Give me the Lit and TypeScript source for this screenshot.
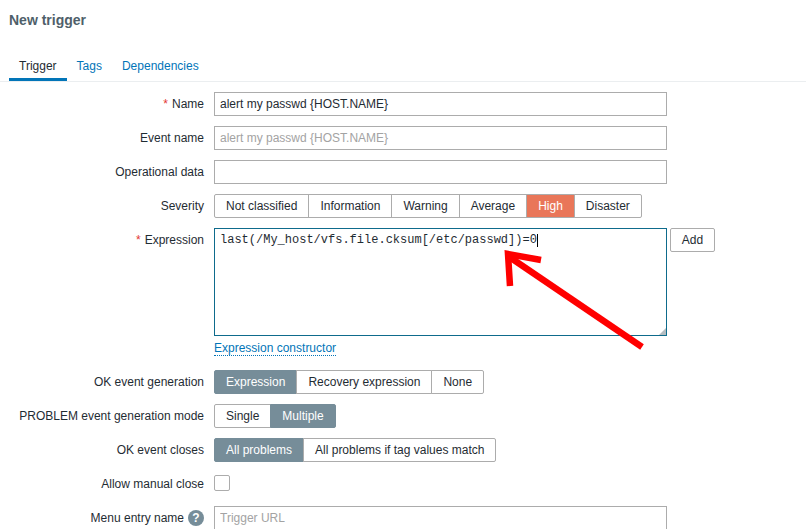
import { LitElement, html, css } from "lit";
import { customElement } from "lit/decorators.js";

type Seg = { t: string; on?: boolean; high?: boolean };

const seg = (items: Seg[]) => html`<div class="seg">
  ${items.map(
    (i) => html`<span class="opt ${i.on ? "on" : ""} ${i.high ? "high" : ""}">${i.t}</span>`
  )}
</div>`;

@customElement("app-root")
export class AppRoot extends LitElement {
  static styles = css`
    :host {
      display: block;
      position: relative;
      width: 806px;
      height: 529px;
      overflow: hidden;
      background: #fff;
      font-family: "Liberation Sans", Arial, sans-serif;
      font-size: 12px;
      color: #1f2c33;
    }
    * { box-sizing: border-box; }
    h1 {
      margin: 0;
      padding: 12px 9px 0;
      height: 53px;
      font-size: 14px;
      line-height: 16px;
      font-weight: bold;
      color: #4f5f6a;
    }
    .tabs {
      display: flex;
      height: 29px;
      padding-left: 9px;
      border-bottom: 1px solid #ebeef0;
    }
    .tab {
      padding: 0 10px;
      height: 28px;
      line-height: 26px;
      color: #0275b8;
      text-decoration: none;
    }
    .tab.active {
      color: #1f2c33;
      border-bottom: 3px solid #0275b8;
    }
    .form {
      display: grid;
      grid-template-columns: 204px 1fr;
      column-gap: 10px;
      row-gap: 10px;
      padding-top: 10px;
    }
    .lbl {
      display: flex;
      justify-content: flex-end;
      align-items: center;
      gap: 4px;
      height: 24px;
      white-space: nowrap;
    }
    .req { color: #e33734; margin-right: 4px; }
    input.text {
      display: block;
      width: 453px;
      height: 24px;
      padding: 0 5px;
      border: 1px solid #acacac;
      border-radius: 0;
      font: inherit;
      color: #1f2c33;
      background: #fff;
      outline: none;
    }
    input.text::placeholder { color: #a3a3a3; opacity: 1; }
    input.muted { color: #a3a3a3; }
    .seg { display: inline-flex; height: 24px; }
    .opt {
      display: flex;
      align-items: center;
      padding: 0 11px;
      border: 1px solid #acacac;
      margin-left: -1px;
      white-space: nowrap;
      background: #fff;
    }
    .opt:first-child { margin-left: 0; border-radius: 2px 0 0 2px; }
    .opt:last-child { border-radius: 0 2px 2px 0; }
    .opt.on { background: #768d99; border-color: #768d99; color: #fff; }
    .opt.high { background: #e97659; border-color: #acacac; color: #fff; }
    .exprcell { height: 132px; }
    .exprwrap { display: flex; align-items: flex-start; gap: 3px; }
    .area { position: relative; width: 453px; height: 108px; }
    textarea {
      display: block;
      width: 453px;
      height: 108px;
      margin: 0;
      padding: 5px 5px;
      border: 1px solid #0e6b8c;
      border-radius: 0;
      outline: none;
      resize: none;
      font-family: "Liberation Mono", monospace;
      font-size: 12px;
      line-height: 13px;
      color: #1f2c33;
    }
    .caret {
      position: absolute;
      left: 323px;
      top: 6px;
      width: 1px;
      height: 13px;
      background: #000;
    }
    .grip {
      position: absolute;
      right: 1px;
      bottom: 1px;
    }
    .add {
      height: 24px;
      width: 45px;
      border: 1px solid #acacac;
      border-radius: 2px;
      background: #fff;
      font: inherit;
      color: #1f2c33;
      padding: 0;
    }
    .link {
      display: inline-block;
      margin-top: 5px;
      line-height: 14px;
      color: #0275b8;
      text-decoration: none;
      border-bottom: 1px dotted #0275b8;
    }
    .check {
      display: block;
      width: 16px;
      height: 16px;
      margin-top: 3px;
      border: 1px solid #acacac;
      border-radius: 2px;
      background: #fff;
    }
    .help {
      width: 16px;
      height: 16px;
      border-radius: 50%;
      background: #768d99;
      color: #fff;
      font-weight: bold;
      font-size: 12px;
      line-height: 16px;
      text-align: center;
    }
    .arrow {
      position: absolute;
      left: 0;
      top: 0;
      pointer-events: none;
    }
  `;

  render() {
    return html`
      <h1>New trigger</h1>
      <nav class="tabs">
        <a class="tab active">Trigger</a>
        <a class="tab">Tags</a>
        <a class="tab">Dependencies</a>
      </nav>
      <div class="form">
        <div class="lbl"><span><span class="req">*</span>Name</span></div>
        <input class="text" .value=${"alert my passwd {HOST.NAME}"} />

        <div class="lbl">Event name</div>
        <input class="text muted" .value=${"alert my passwd {HOST.NAME}"} />

        <div class="lbl">Operational data</div>
        <input class="text" />

        <div class="lbl">Severity</div>
        ${seg([
          { t: "Not classified" },
          { t: "Information" },
          { t: "Warning" },
          { t: "Average" },
          { t: "High", high: true },
          { t: "Disaster" },
        ])}

        <div class="lbl"><span><span class="req">*</span>Expression</span></div>
        <div class="exprcell">
          <div class="exprwrap">
            <div class="area">
              <textarea .value=${"last(/My_host/vfs.file.cksum[/etc/passwd])=0"}></textarea>
              <span class="caret"></span>
              <svg class="grip" width="7" height="7" viewBox="0 0 7 7">
                <path d="M7 0 L7 7 L0 7 Z" fill="#b4bcc0" />
              </svg>
            </div>
            <button class="add">Add</button>
          </div>
          <a class="link">Expression constructor</a>
        </div>

        <div class="lbl">OK event generation</div>
        ${seg([{ t: "Expression", on: true }, { t: "Recovery expression" }, { t: "None" }])}

        <div class="lbl">PROBLEM event generation mode</div>
        ${seg([{ t: "Single" }, { t: "Multiple", on: true }])}

        <div class="lbl">OK event closes</div>
        ${seg([{ t: "All problems", on: true }, { t: "All problems if tag values match" }])}

        <div class="lbl">Allow manual close</div>
        <div><span class="check"></span></div>

        <div class="lbl">Menu entry name <span class="help">?</span></div>
        <input class="text" placeholder="Trigger URL" />
      </div>
      <svg class="arrow" width="806" height="529" viewBox="0 0 806 529">
        <path d="M642 347 L508 256" stroke="#ff0000" stroke-width="6.5" fill="none" />
        <path d="M541 260 L508 254 L510 286" stroke="#ff0000" stroke-width="6.5" fill="none" />
      </svg>
    `;
  }
}
